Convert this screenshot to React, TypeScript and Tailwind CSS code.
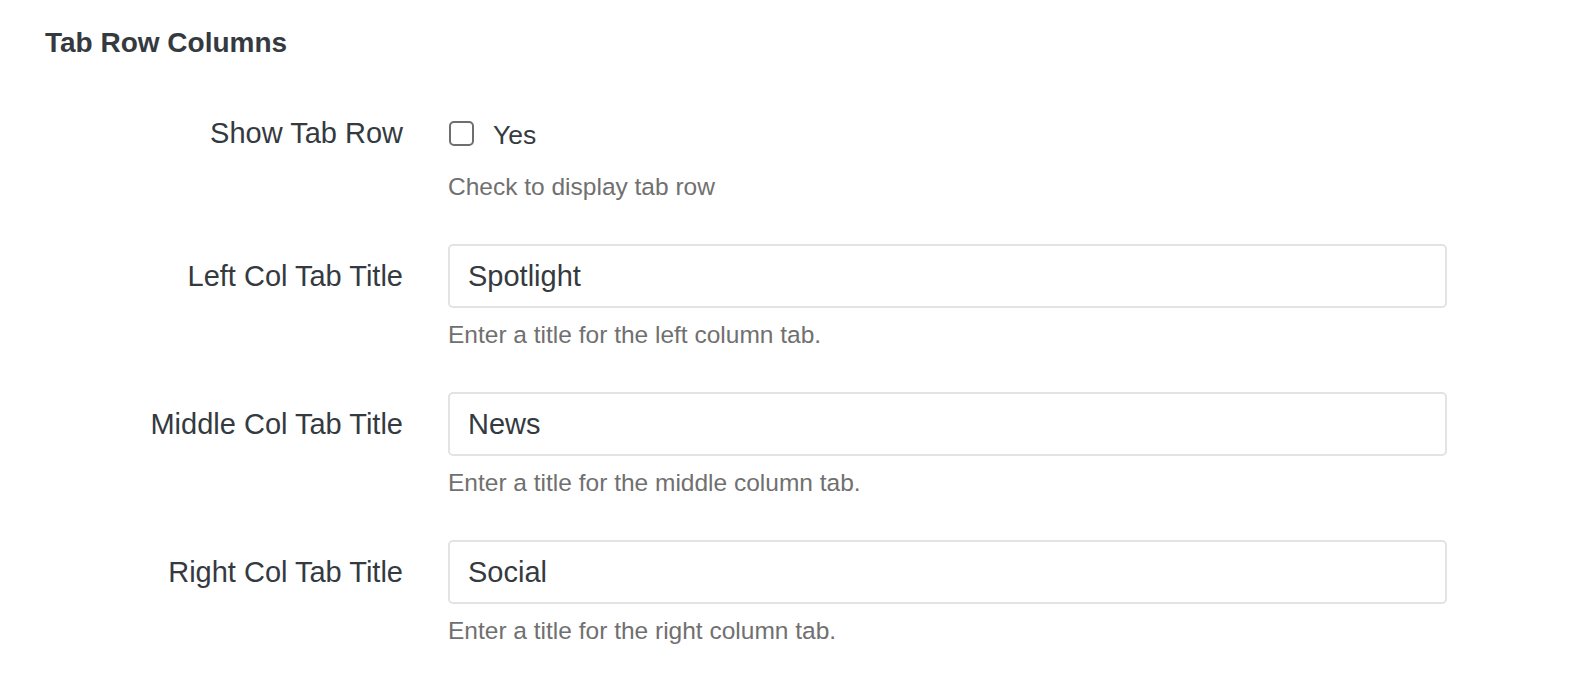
import React from "react";

const font = { fontFamily: '"Liberation Sans", Arial, Helvetica, sans-serif' };

function TextRow({ label, value, help }: { label: string; value: string; help: string }) {
  return (
    <div className="flex mt-[39px]">
      <div className="w-[403px] shrink-0 flex justify-end h-[64px] items-center">
        <span className="text-[29px] leading-[36px] text-[#343a40]">{label}</span>
      </div>
      <div className="ml-[45px] w-[999px]">
        <div className="h-[64px] w-full border-2 border-[#e3e3e3] rounded-[5px] bg-white flex items-center pl-[18px]">
          <span className="text-[29px] leading-[36px] text-[#343a40]">{value}</span>
        </div>
        <div className="mt-[9px] text-[24.5px] leading-[36px] text-[#707070]">{help}</div>
      </div>
    </div>
  );
}

export default function App() {
  return (
    <div className="w-[1590px] h-[684px] bg-white" style={font}>
      <div className="pt-[25px] pl-[45px]">
        <h2 className="text-[28px] leading-[36px] font-bold text-[#343a40]">Tab Row Columns</h2>
      </div>
      <div className="mt-[54px]">
        <div className="flex">
          <div className="w-[403px] shrink-0 flex justify-end">
            <span className="text-[29px] leading-[36px] text-[#343a40]">Show Tab Row</span>
          </div>
          <div className="ml-[45px]">
            <div className="flex items-center h-[36px]">
              <span className="block ml-[1px] w-[25px] h-[25px] border-2 border-[#6e6e6e] rounded-[5px] bg-white"></span>
              <span className="ml-[19px] text-[26.5px] leading-[36px] text-[#343a40] translate-y-[2px]">Yes</span>
            </div>
            <div className="mt-[18px] text-[24.5px] leading-[36px] text-[#707070]">Check to display tab row</div>
          </div>
        </div>
        <div className="mt-[7px]">
          <TextRow label="Left Col Tab Title" value="Spotlight" help="Enter a title for the left column tab." />
          <TextRow label="Middle Col Tab Title" value="News" help="Enter a title for the middle column tab." />
          <TextRow label="Right Col Tab Title" value="Social" help="Enter a title for the right column tab." />
        </div>
      </div>
    </div>
  );
}
